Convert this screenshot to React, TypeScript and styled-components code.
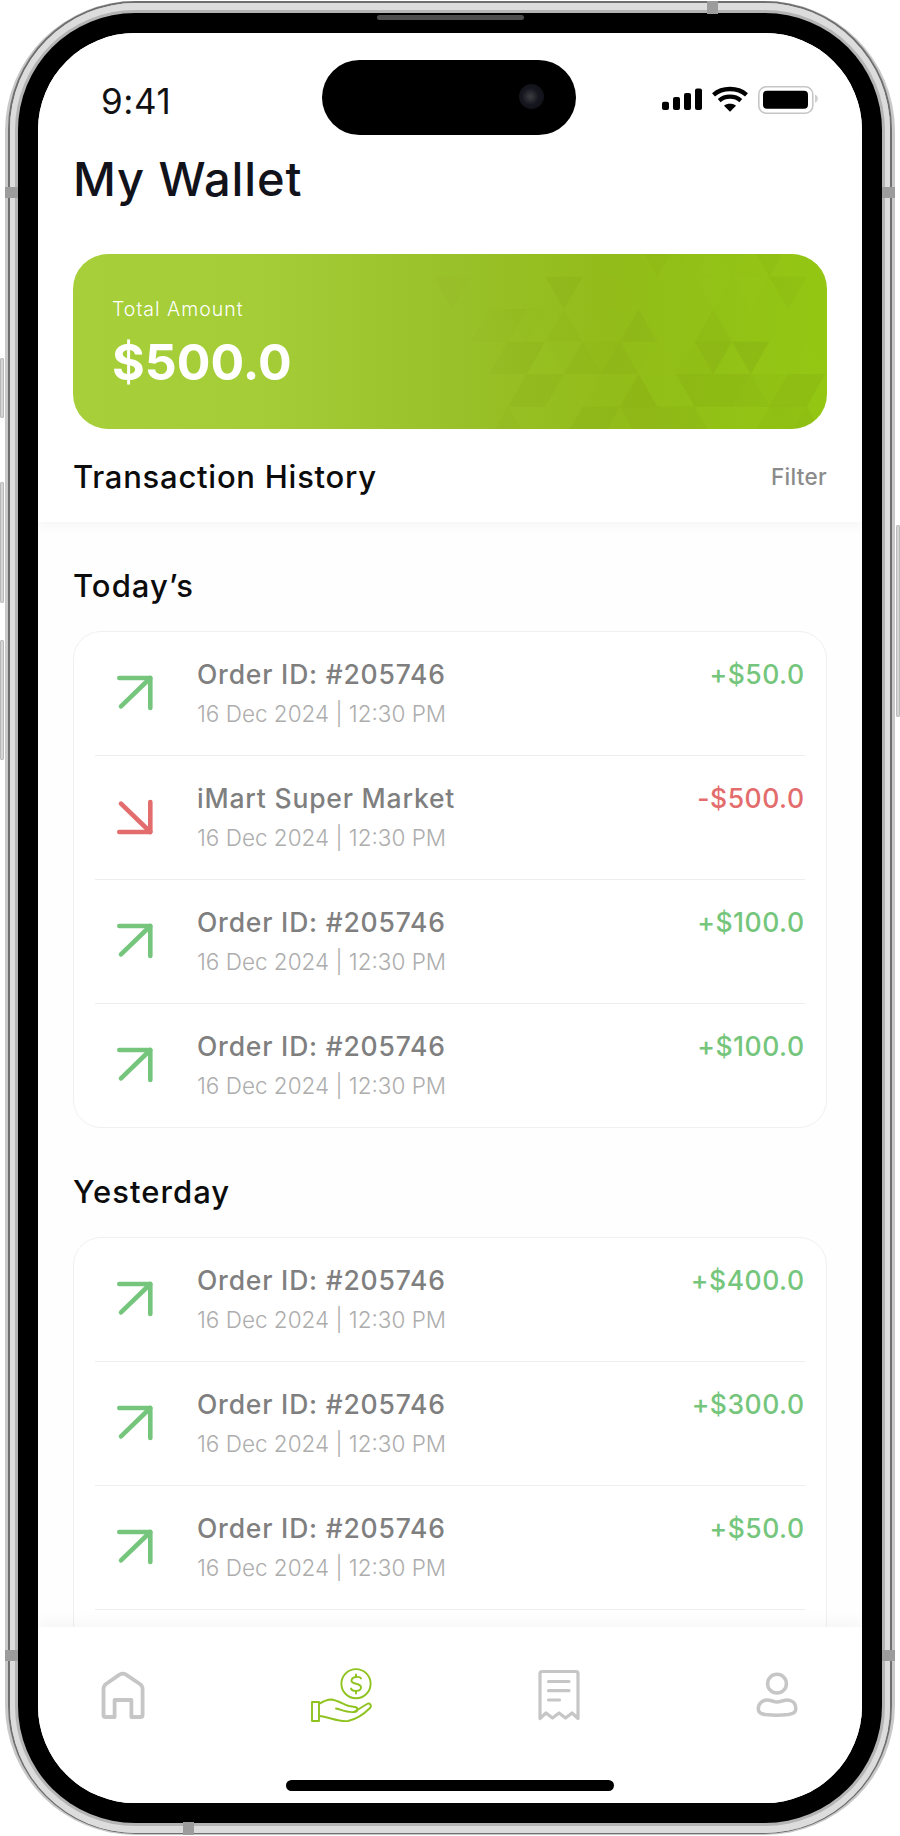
import React from "react";
import styled, {createGlobalStyle} from "styled-components";

const FONT = `Inter, "Noto Sans", "Liberation Sans", sans-serif`;
const GREEN = "#75c67c";
const RED = "#e36c6c";
const NAV_GREY = "#c6c6c6";

const GlobalStyle = createGlobalStyle`
  html, body {
    margin: 0;
    padding: 0;
    background: #ffffff;
    width: 900px;
    height: 1836px;
    overflow: hidden;
    font-family: ${FONT};
  }
  * { box-sizing: border-box; }
`;

const Page = styled.div`
  width: 900px;
  height: 1836px;
  padding: 1px 5px;
`;

// the metal band is three nested rims, the bezel sits inside it
const Shell = styled.div`
  position: relative;
  width: 890px;
  height: 1834px;
  border-style: solid;
  border-color: #c9c9c9;
  border-width: 0 3px 1px;
  border-radius: 130px;
  background: #d8d8d8;
`;

const MidRim = styled.div`
  height: 100%;
  border: 2px solid #6f6f6f;
  border-bottom-width: 1px;
  border-radius: 128px;
`;

const InnerRim = styled.div`
  height: 100%;
  padding: 10px 8px;
  border-radius: 126px;
  background: #dcdcdc;
`;

const Bezel = styled.div`
  height: 100%;
  padding: 20px;
  border-radius: 117px;
  background: #000000;
  box-shadow: 0 0 0 3px #b4b4b4;
`;

const SideButton = styled.div<{ $side: "left" | "right"; $top: number; $height: number }>`
  position: absolute;
  ${p => p.$side}: -8px;
  top: ${p => p.$top}px;
  width: 4px;
  height: ${p => p.$height}px;
  border-radius: 2px;
  background: #d6d6d6;
  box-shadow: inset 0 0 0 1px #b9b9b9;
`;

const Antenna = styled.div<{ $x?: number; $y?: number; $side?: "left" | "right"; $bottom?: boolean }>`
  position: absolute;
  background: #9c9c9c;
  ${p => p.$side ? `${p.$side}: -3px; top: ${p.$y}px; width: 13px; height: 11px;` : `left: ${p.$x}px; width: 11px; height: 13px; ${p.$bottom ? "bottom: -1px;" : "top: 0;"}`}
`;

const Speaker = styled.div`
  position: absolute;
  left: 369px;
  top: 14px;
  width: 147px;
  height: 5px;
  border-radius: 3px;
  background: #4d4d4d;
`;

const Screen = styled.div`
  position: relative;
  display: flex;
  flex-direction: column;
  height: 100%;
  overflow: hidden;
  border-radius: 97px;
  background: #ffffff;
`;

const Island = styled.div`
  position: absolute;
  left: 284px;
  top: 27px;
  width: 254px;
  height: 75px;
  border-radius: 38px;
  background: #000000;
  z-index: 3;
`;

const Camera = styled.div`
  position: absolute;
  left: 197px;
  top: 24px;
  width: 25px;
  height: 25px;
  border-radius: 50%;
  background: radial-gradient(circle at 45% 50%, #3d3d42 0%, #16161f 45%, #0d0d14 100%);
`;

const Header = styled.header`
  position: relative;
  flex-shrink: 0;
  padding-bottom: 21px;
  background: #ffffff;
  box-shadow: 0 3px 12px rgba(0, 0, 0, 0.045);
  z-index: 2;
`;

const StatusBar = styled.div`
  display: flex;
  justify-content: space-between;
  align-items: flex-start;
  height: 117px;
  padding: 50px 44px 0 63px;
`;

const Time = styled.span`
  font-size: 35px;
  line-height: 36px;
  font-weight: 400;
  letter-spacing: 0.6px;
  color: #111111;
`;

const StatusIcons = styled.svg`
  display: block;
  width: 156px;
  height: 31px;
  margin-top: 1px;
`;

const Title = styled.h1`
  margin: 0 0 46px;
  padding: 0 35px;
  font-size: 47px;
  line-height: 58px;
  font-weight: 500;
  letter-spacing: 0.9px;
  color: #11121a;
`;

const BalanceCard = styled.section`
  position: relative;
  height: 175px;
  margin: 0 35px;
  padding: 39px 39px 0;
  overflow: hidden;
  border-radius: 35px;
  background: linear-gradient(90deg, #a6cf39 0%, #a4cd37 24%, #99c12a 50%, #92bc19 72%, #93c713 100%);
  color: #ffffff;
`;

const Pattern = styled.svg`
  position: absolute;
  inset: 0;
  width: 754px;
  height: 175px;
`;

const BalanceLabel = styled.div`
  position: relative;
  font-size: 19.5px;
  line-height: 32px;
  font-weight: 300;
  letter-spacing: 1px;
`;

const BalanceValue = styled.div`
  position: relative;
  margin-top: 9px;
  font-size: 50px;
  line-height: 56px;
  font-weight: 700;
  letter-spacing: 0;
`;

const HistoryRow = styled.div`
  display: flex;
  justify-content: space-between;
  align-items: center;
  height: 48px;
  margin: 24px 35px 0;
`;

const HistoryTitle = styled.h2`
  margin: 0;
  font-size: 31px;
  line-height: 48px;
  font-weight: 500;
  letter-spacing: 0.75px;
  color: #0c0c0c;
`;

const FilterLink = styled.span`
  padding-bottom: 2px;
  font-size: 22.5px;
  font-weight: 500;
  letter-spacing: 0.3px;
  color: #8b8b8b;
`;

const Feed = styled.main`
  flex: 1;
  min-height: 0;
  overflow: hidden;
  padding: 0 35px;
  background: #fefefe;
`;

const DayLabel = styled.h3`
  margin: 44px 0 25px;
  font-size: 31px;
  line-height: 40px;
  font-weight: 500;
  letter-spacing: 1.05px;
  color: #0c0c0c;
`;

const TxCard = styled.div<{ $open?: boolean }>`
  padding: 0 21px ${p => (p.$open ? "40px" : "0")};
  border: 1.5px solid #f0f0f0;
  border-radius: 28px;
  background: #ffffff;
`;

const TxRow = styled.div<{ $last?: boolean }>`
  display: flex;
  height: ${p => (p.$last ? "123px" : "124px")};
  padding: 22px 0.5px 0 19.5px;
  border-bottom: ${p => (p.$last ? "none" : "1.5px solid #eeeeee")};
`;

const TxArrow = styled.svg<{ $tone: string }>`
  flex-shrink: 0;
  width: 40px;
  height: 40px;
  margin: 19px 42.5px 0 0;
  fill: none;
  stroke: ${p => p.$tone};
  stroke-width: 4.6;
  stroke-linecap: round;
  stroke-linejoin: round;
`;

const TxInfo = styled.div`
  flex: 1;
`;

const TxName = styled.div`
  font-size: 26.5px;
  line-height: 40px;
  font-weight: 500;
  letter-spacing: 0.8px;
  color: #7f7f7f;
`;

const TxDate = styled.div`
  margin-top: 2px;
  font-size: 22.5px;
  line-height: 36px;
  font-weight: 300;
  color: #adadad;
`;

const TxAmount = styled.div<{ $tone: string }>`
  font-size: 26.5px;
  line-height: 40px;
  font-weight: 500;
  letter-spacing: 0.5px;
  color: ${p => p.$tone};
`;

const BottomNav = styled.nav`
  position: relative;
  display: flex;
  flex-direction: column;
  flex-shrink: 0;
  height: 176px;
  padding-top: 34px;
  background: #ffffff;
  box-shadow: 0 -6px 14px rgba(0, 0, 0, 0.035);
  z-index: 2;
`;

const NavItems = styled.div`
  display: flex;
  justify-content: space-between;
  padding: 0 45px;
`;

const NavIcon = styled.svg<{ $active?: boolean; $stroke: number }>`
  display: block;
  width: 80px;
  height: 70px;
  fill: none;
  stroke: ${p => (p.$active ? "#8fc31f" : NAV_GREY)};
  stroke-width: ${p => p.$stroke};
  stroke-linecap: round;
  stroke-linejoin: round;
`;

const HomeIndicator = styled.div`
  align-self: center;
  width: 328px;
  height: 11px;
  margin-top: 49px;
  border-radius: 6px;
  background: #000000;
`;

type Tri = [number, number, "u" | "d", number];

// lattice of the card's pattern: k is the apex column, r the band, last value the shade (minus is lighter)
const TRIANGLES: Tri[] = [
  [5, 0, "u", -0.1], [4, 0, "d", -0.05], [6, 0, "d", -0.06], [7, 0, "u", -0.12], [8, 0, "d", 0.2], [9, 0, "u", -0.12], [2, 0, "d", 0.2],
  [-3, 1, "d", 0.38], [9, 1, "d", 0.28], [-9, 1, "d", 0.08], [-2, 1, "u", -0.07], [-1, 1, "d", -0.07], [0, 1, "u", -0.07], [5, 1, "d", -0.1], [7, 1, "d", -0.1],
  [1, 2, "u", 0.38], [5, 2, "u", 0.3], [-3, 2, "u", 0.18], [-5, 2, "d", 0.08], [-6, 2, "d", 0.1], [-7, 2, "u", 0.1], [-1, 2, "u", -0.05],
  [5, 3, "d", 0.55], [7, 3, "d", 0.55], [0, 3, "u", 0.35], [-2, 3, "u", 0.3], [-4, 3, "u", -0.1], [8, 3, "u", -0.16], [-5, 3, "d", 0.25], [-6, 3, "u", 0.25],
  [2, 3, "u", -0.05], [4, 3, "u", 0.12], [-1, 3, "d", 0.1], [10, 3, "u", -0.08],
  [1, 4, "u", 0.45], [4, 4, "d", 0.48], [5, 4, "u", 0.48], [6, 4, "d", 0.48], [7, 4, "u", 0.38], [8, 4, "d", 0.15], [9, 4, "u", 0.42], [10, 4, "d", 0.42],
  [-5, 4, "u", 0.28], [-4, 4, "d", 0.28], [-2, 4, "d", -0.1], [-3, 4, "u", -0.06], [-1, 4, "u", -0.06], [3, 4, "u", -0.04], [2, 4, "d", -0.04],
  [-2, 5, "u", 0.38], [-1, 5, "d", 0.38], [1, 5, "d", 0.35], [2, 5, "u", 0.3], [3, 5, "d", 0.3], [4, 5, "u", 0.32], [8, 5, "u", 0.2], [9, 5, "d", 0.28], [10, 5, "u", 0.4], [-6, 5, "u", 0.18],
];

const LINES = [-17, 80, 178, 275, 372, 470, 567];

function triPoints([k, r, dir]: Tri) {
  const px = (c: number) => 347 + (600 + 56 * c) / 3;
  const py = (l: number) => (LINES[l] - 12) / 3;
  const apexLine = dir === "u" ? r : r + 1;
  const baseLine = dir === "u" ? r + 1 : r;
  return `${px(k)},${py(apexLine)} ${px(k - 1)},${py(baseLine)} ${px(k + 1)},${py(baseLine)}`;
}

const CardPattern = () => (
  <Pattern viewBox="0 0 754 175">
    {TRIANGLES.map((t, i) => (
      <polygon
        key={i}
        points={triPoints(t)}
        fill={t[3] > 0 ? "#7d9a12" : "#b4dc30"}
        fillOpacity={Math.abs(t[3]) * 0.4}
      />
    ))}
  </Pattern>
);

const StatusGlyphs = () => (
  <StatusIcons viewBox="0 0 156 31">
    <rect x="0" y="17.7" width="7" height="8.3" rx="2" fill="#000" />
    <rect x="11" y="13" width="7" height="13" rx="2" fill="#000" />
    <rect x="22" y="9" width="7" height="17" rx="2" fill="#000" />
    <rect x="33" y="4.4" width="7" height="21.6" rx="2" fill="#000" />
    <path d="M51.5 10.8C60.5 3 75.5 3 84.5 10.8" fill="none" stroke="#000" strokeWidth="4.4" />
    <path d="M57.2 16.6C63 11.4 73 11.4 78.8 16.6" fill="none" stroke="#000" strokeWidth="4.2" />
    <path d="M68 27.7L62 21.8C65.2 19.2 70.8 19.2 74 21.8Z" fill="#000" />
    <rect x="96.8" y="2.8" width="54" height="26.4" rx="7.5" fill="#fff" stroke="#c6c6c6" strokeWidth="1.6" />
    <rect x="101" y="6.8" width="45" height="18" rx="4" fill="#000" />
    <path d="M153 10.5C155 11 155.8 13 155.8 14.6C155.8 16.2 155 18 153 18.7Z" fill="#cfcfcf" />
  </StatusIcons>
);

const UpArrow = () => (
  <TxArrow $tone={GREEN} viewBox="0 0 40 40">
    <path d="M4.3 5H35.3V35" />
    <path d="M6 33.3L35.3 5" />
  </TxArrow>
);

const DownArrow = () => (
  <TxArrow $tone={RED} viewBox="0 0 40 40">
    <path d="M4.3 35H35.3V5" />
    <path d="M6 6.7L35.3 35" />
  </TxArrow>
);

const HomeIcon = () => (
  <NavIcon $stroke={3.8} viewBox="-15 -8 80 70">
    <path d="M5.5 46V20Q5.5 17 8 15L21.5 5.6Q24.8 3.6 28 5.6L41.9 15Q44.6 17 44.6 20V46Q44.6 48 42.6 48H33.4V31H16.6V48H7.5Q5.5 48 5.5 46Z" />
  </NavIcon>
);

const WalletIcon = () => (
  <NavIcon $active $stroke={1.9} viewBox="0 0 80 70">
    <circle cx="55" cy="22.7" r="14.6" />
    <path d="M60 17.4C59 15.2 51 15 50.5 19.5C50.3 24 60 21.5 60 26.5C60 31 51 30.5 50 27.6" />
    <path d="M55 13.4V16M55 30V32.5" />
    <rect x="11" y="41" width="7" height="19" />
    <path d="M18 43C22 40.5 26 38.5 30 38.5C36 39 42 43 48 45L54 46C58 47 57 51 53 51C47 52 41 49 35 47.5" />
    <path d="M53 51L66 43C69 41 71 45 69 47C64 52 56 58 47 60C37 61 28 56 18 55" />
  </NavIcon>
);

const ReceiptIcon = () => (
  <NavIcon $stroke={3.2} viewBox="-11 0 80 70">
    <path d="M10 57.5V12.5Q10 10.5 12 10.5H46Q48 10.5 48 12.5V57.5L42 52L35.5 57L29 52L22.5 57L16 52Z" />
    <path d="M18.5 20.5H39M18.5 29.7H39M18.5 39H29.5" />
  </NavIcon>
);

const UserIcon = () => (
  <NavIcon $stroke={3.5} viewBox="-13.3 -8 80 70">
    <circle cx="26.7" cy="14.7" r="9.4" />
    <path d="M8 40C8 33.5 13 31 17 31C21 31 23 33 26.7 33C30.5 33 33 31 37 31C41 31 45.5 33.5 45.5 40C45.5 44 42 45 38 45.6C30 46.6 23 46.6 15 45.6C11 45 8 44 8 40Z" />
  </NavIcon>
);

type Tx = { name: string; amount: string; down?: boolean };

const TODAY: Tx[] = [
  {name: "Order ID: #205746", amount: "+$50.0"},
  {name: "iMart Super Market", amount: "-$500.0", down: true},
  {name: "Order ID: #205746", amount: "+$100.0"},
  {name: "Order ID: #205746", amount: "+$100.0"},
];

const YESTERDAY: Tx[] = [
  {name: "Order ID: #205746", amount: "+$400.0"},
  {name: "Order ID: #205746", amount: "+$300.0"},
  {name: "Order ID: #205746", amount: "+$50.0"},
];

// open: the list runs on under the tab bar, so its last row keeps the divider
const TxList = ({items, open}: { items: Tx[]; open?: boolean }) => (
  <TxCard $open={open}>
    {items.map((tx, i) => (
      <TxRow key={i} $last={!open && i === items.length - 1}>
        {tx.down ? <DownArrow /> : <UpArrow />}
        <TxInfo>
          <TxName>{tx.name}</TxName>
          <TxDate>16 Dec 2024 | 12:30 PM</TxDate>
        </TxInfo>
        <TxAmount $tone={tx.down ? RED : GREEN}>{tx.amount}</TxAmount>
      </TxRow>
    ))}
  </TxCard>
);

export default function App() {
  return (
    <Page>
      <GlobalStyle />
      <Shell>
        <SideButton $side="left" $top={357} $height={60} />
        <SideButton $side="left" $top={481} $height={121} />
        <SideButton $side="left" $top={639} $height={120} />
        <SideButton $side="right" $top={524} $height={192} />
        <Antenna $side="left" $y={186} />
        <Antenna $side="left" $y={1649} />
        <Antenna $side="right" $y={186} />
        <Antenna $side="right" $y={1649} />
        <Antenna $x={699} />
        <Antenna $x={175} $bottom />
        <MidRim>
          <InnerRim>
            <Bezel>
              <Screen>
                <Island>
                  <Camera />
                </Island>
                <Header>
                  <StatusBar>
                    <Time>9:41</Time>
                    <StatusGlyphs />
                  </StatusBar>
                  <Title>My Wallet</Title>
                  <BalanceCard>
                    <CardPattern />
                    <BalanceLabel>Total Amount</BalanceLabel>
                    <BalanceValue>$500.0</BalanceValue>
                  </BalanceCard>
                  <HistoryRow>
                    <HistoryTitle>Transaction History</HistoryTitle>
                    <FilterLink>Filter</FilterLink>
                  </HistoryRow>
                </Header>
                <Feed>
                  <DayLabel>Today’s</DayLabel>
                  <TxList items={TODAY} />
                  <DayLabel>Yesterday</DayLabel>
                  <TxList items={YESTERDAY} open />
                </Feed>
                <BottomNav>
                  <NavItems>
                    <HomeIcon />
                    <WalletIcon />
                    <ReceiptIcon />
                    <UserIcon />
                  </NavItems>
                  <HomeIndicator />
                </BottomNav>
              </Screen>
            </Bezel>
          </InnerRim>
        </MidRim>
        <Speaker />
      </Shell>
    </Page>
  );
}
